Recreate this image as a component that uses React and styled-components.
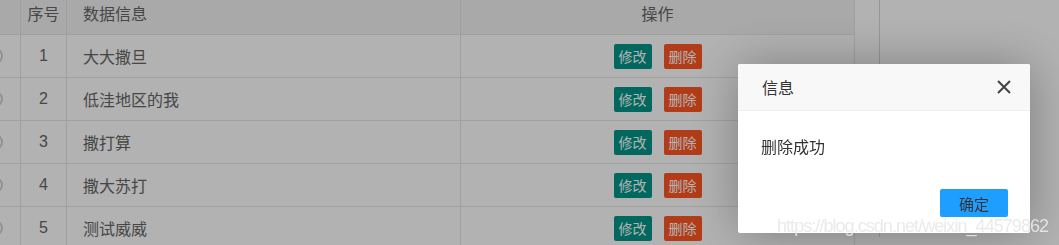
import React from "react";
import styled, { createGlobalStyle } from "styled-components";

const GlobalStyle = createGlobalStyle`
  html, body { margin: 0; padding: 0; height: 100%; background: #fff; overflow: hidden; }
  body { font-family: "Liberation Sans", "Noto Sans CJK SC", sans-serif; }
  #root { height: 100%; }
`;

const Page = styled.div`
  display: flex;
  height: 100vh;
  margin-top: -8px;
`;

const Table = styled.div`
  display: grid;
  grid-template-columns: 51px 46px 394px 394px;
  grid-auto-rows: 43px;
  margin-left: -30px;
  align-content: start;
  flex: none;
`;

const Cell = styled.div`
  box-sizing: border-box;
  border-right: 1px solid #e6e6e6;
  border-bottom: 1px solid #e6e6e6;
  background: ${(p) => (p.$head ? "#f2f2f2" : "#fff")};
  display: flex;
  align-items: center;
  justify-content: ${(p) => (p.$align === "left" ? "flex-start" : "center")};
  padding: ${(p) => (p.$align === "left" ? "0 16px" : "0")};
  font-size: 16px;
  color: #666;
  gap: 12px;
`;

const Radio = styled.span`
  box-sizing: border-box;
  width: 16px;
  height: 16px;
  border-radius: 50%;
  border: 2px solid #d2d2d2;
`;

const Gutter = styled.div`
  box-sizing: border-box;
  width: 25px;
  flex: none;
  border-right: 1px solid #d9d9d9;
  background: #fff;
`;

const Btn = styled.span`
  display: inline-flex;
  align-items: center;
  justify-content: center;
  width: 38px;
  height: 25px;
  border-radius: 2px;
  font-size: 14px;
  color: #fff;
  background: ${(p) => (p.$danger ? "#ff5722" : "#009688")};
`;

const Shade = styled.div`
  position: fixed;
  inset: 0;
  background: rgba(0, 0, 0, 0.3);
`;

const Dialog = styled.div`
  position: fixed;
  left: 738px;
  top: 64px;
  width: 292px;
  height: 169px;
  background: #fff;
  border-radius: 2px;
  box-shadow: 1px 1px 50px rgba(0, 0, 0, 0.3);
  display: flex;
  flex-direction: column;
  overflow: hidden;
`;

const Title = styled.div`
  box-sizing: border-box;
  height: 47px;
  flex: none;
  background: #f8f8f8;
  border-bottom: 1px solid #eee;
  display: flex;
  align-items: center;
  justify-content: space-between;
  padding: 0 19px 0 24px;
  font-size: 16px;
  color: #333;
`;

const Close = styled.svg`
  width: 14px;
  height: 14px;
  display: block;
`;

const Content = styled.div`
  padding: 25px 23px 0;
  font-size: 16px;
  line-height: 24px;
  color: #333;
`;

const ButtonBar = styled.div`
  margin-top: auto;
  display: flex;
  justify-content: flex-end;
  padding: 0 22px 16px;
`;

const Confirm = styled.span`
  display: inline-flex;
  align-items: center;
  justify-content: center;
  width: 68px;
  height: 28px;
  border-radius: 2px;
  background: #1e9fff;
  color: #333;
  font-size: 15px;
`;

const Watermark = styled.div`
  position: fixed;
  left: 777px;
  top: 216px;
  font-family: "Liberation Sans", sans-serif;
  font-size: 18px;
  letter-spacing: -0.95px;
  color: rgba(232, 232, 232, 0.9);
  white-space: nowrap;
  pointer-events: none;
`;

const rows = [
  { id: 1, text: "大大撒旦" },
  { id: 2, text: "低洼地区的我" },
  { id: 3, text: "撒打算" },
  { id: 4, text: "撒大苏打" },
  { id: 5, text: "测试威威" },
];

export default function App() {
  return (
    <>
      <GlobalStyle />
      <Page>
        <Table>
          <Cell $head />
          <Cell $head>序号</Cell>
          <Cell $head $align="left">数据信息</Cell>
          <Cell $head>操作</Cell>
          {rows.map((r) => (
            <React.Fragment key={r.id}>
              <Cell>
                <Radio />
              </Cell>
              <Cell>{r.id}</Cell>
              <Cell $align="left">{r.text}</Cell>
              <Cell>
                <Btn>修改</Btn>
                <Btn $danger>删除</Btn>
              </Cell>
            </React.Fragment>
          ))}
        </Table>
        <Gutter />
      </Page>
      <Shade />
      <Dialog>
        <Title>
          <span>信息</span>
          <Close viewBox="0 0 14 14">
            <path d="M1 1 L13 13 M13 1 L1 13" stroke="#444" strokeWidth="2" />
          </Close>
        </Title>
        <Content>删除成功</Content>
        <ButtonBar>
          <Confirm>确定</Confirm>
        </ButtonBar>
      </Dialog>
      <Watermark>https://blog.csdn.net/weixin_44579862</Watermark>
    </>
  );
}
